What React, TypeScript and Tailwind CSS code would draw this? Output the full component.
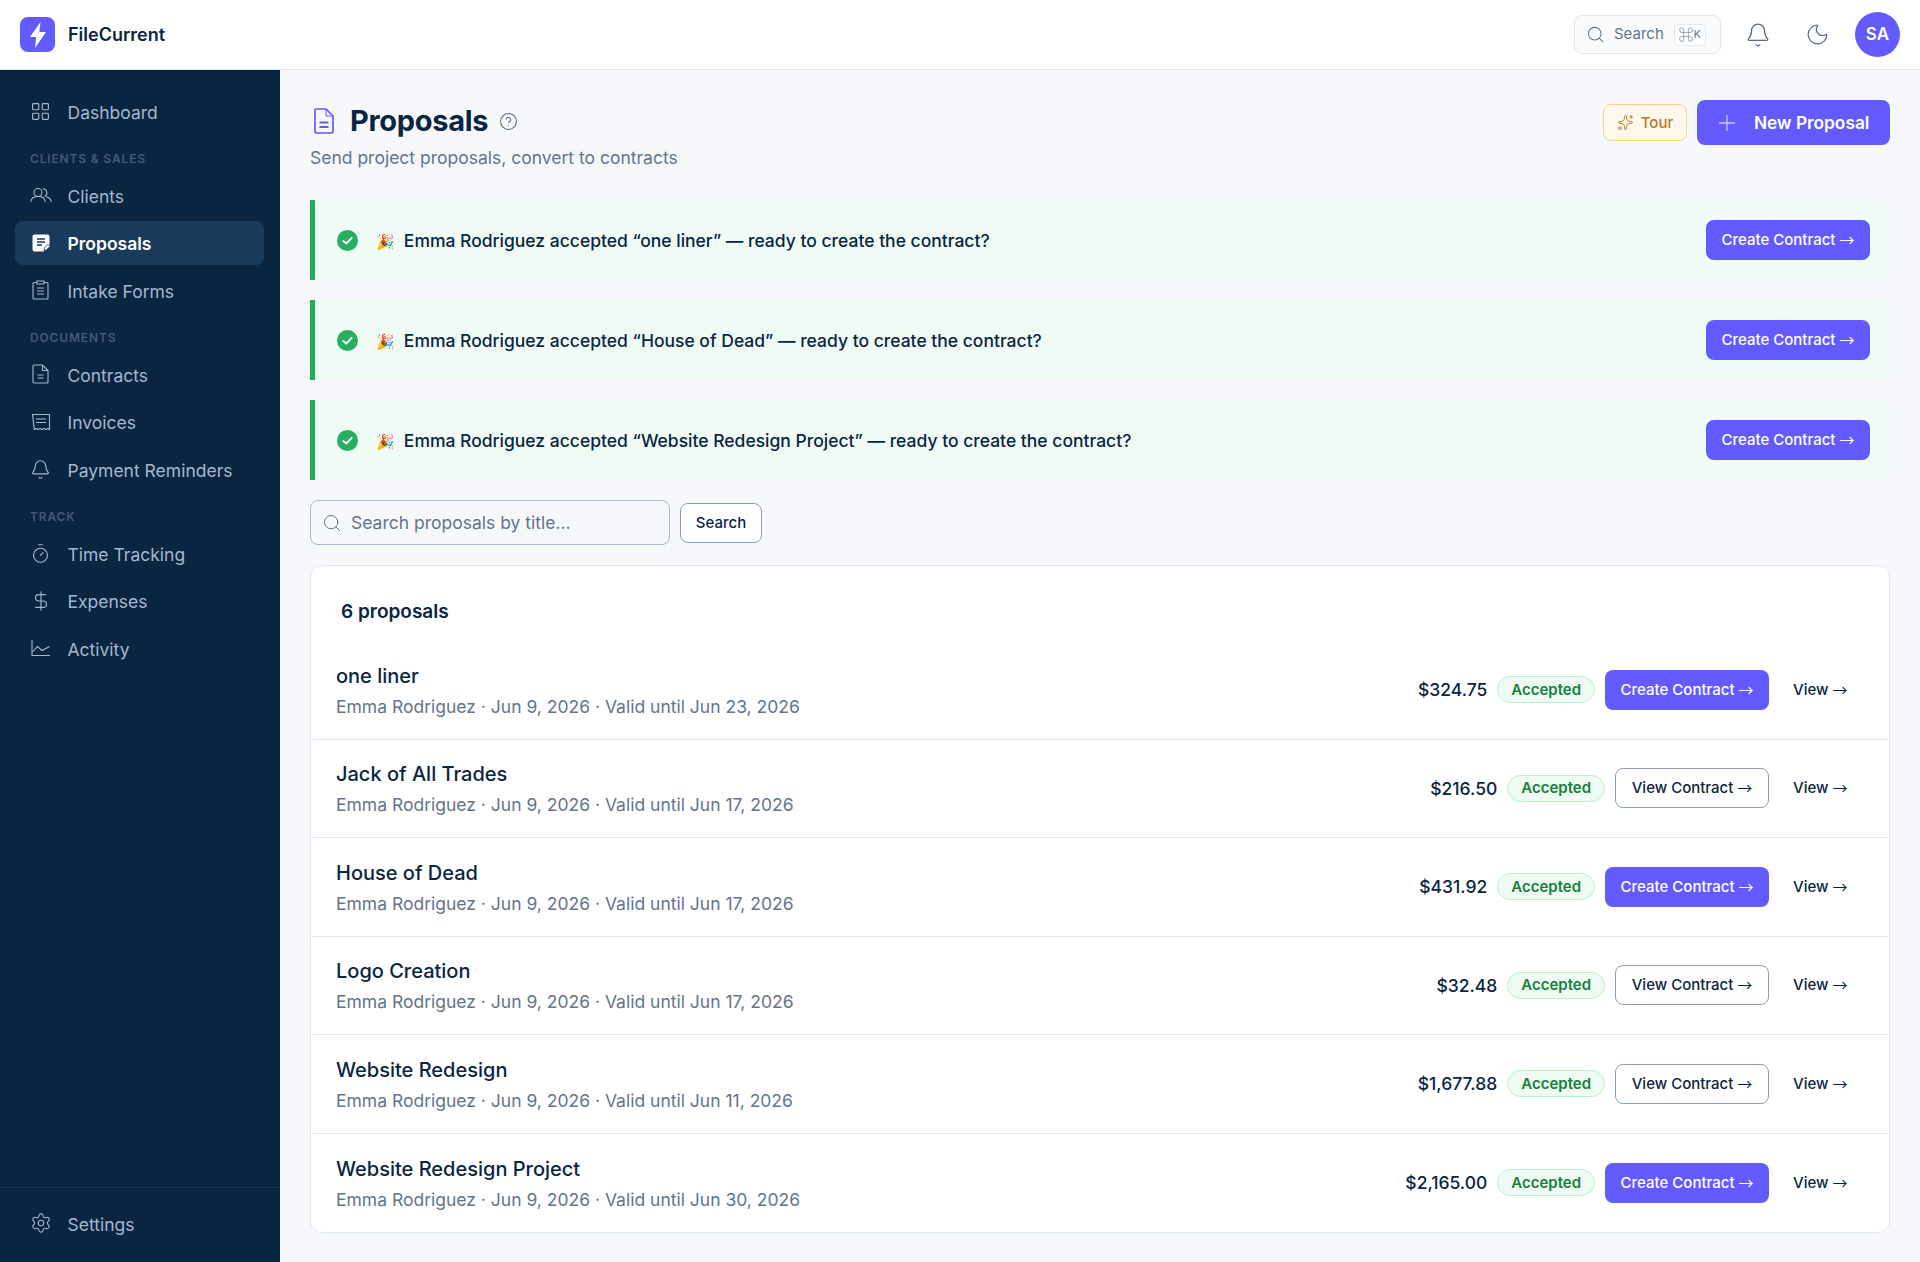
import React from "react";
import {
  LayoutGrid,
  Bell,
  Timer,
  DollarSign,
  Settings,
  Search,
  Moon,
  Plus,
  Sparkles,
  CircleHelp,
} from "lucide-react";

const iconClass = "w-[21px] h-[21px]";

const UsersIcon = () => (
  <svg viewBox="0 0 22 14" fill="none" stroke="currentColor" strokeWidth="1.1" className="w-[22px] h-[14px]" strokeLinecap="round">
    <circle cx="8" cy="4.500" r="4" />
    <path d="M0.800 13.500c.5-3.300 3.400-5 7.200-5s6.700 1.700 7.200 5" />
    <path d="M13.200 0.800a4 4 0 0 1 1.800 7.400" />
    <path d="M16.600 8.900c2.500.5 4.100 2.200 4.600 4.600" />
  </svg>
);

const DraftIcon = () => (
  <svg viewBox="0 0 18 18" className="w-[18px] h-[18px]">
    <path d="M2.500 0.500h13a2 2 0 0 1 2 2v9l-6 6h-9a2 2 0 0 1-2-2v-13a2 2 0 0 1 2-2z" fill="#ffffff" />
    <path d="M5 5h8M5 8h8M5 11h5" stroke="#1a3a5c" strokeWidth="1.4" />
    <path d="M12 16.500l.4-2.500 3.500-3.500 2 2-3.500 3.500z" fill="#ffffff" stroke="#1a3a5c" strokeWidth="0.8" />
  </svg>
);

const ClipboardIcon = () => (
  <svg viewBox="0 0 17 20" fill="none" stroke="currentColor" strokeWidth="1.1" className="w-[17px] h-[20px]">
    <path d="M5 2.500H2a1 1 0 0 0-1 1v14.500a1 1 0 0 0 1 1h13a1 1 0 0 0 1-1V3.500a1 1 0 0 0-1-1h-3" />
    <path d="M5 1h7v3H5z" />
    <path d="M5 8h7M5 11h7M5 14h7" />
  </svg>
);

const ContractIcon = () => (
  <svg viewBox="0 0 17 20" fill="none" stroke="currentColor" strokeWidth="1.1" className="w-[17px] h-[20px]">
    <path d="M2 1h8.500L16 6.500V18a1 1 0 0 1-1 1H2a1 1 0 0 1-1-1V2a1 1 0 0 1 1-1z" />
    <path d="M10.500 1v5.500H16" />
    <path d="M5.500 11h6M5.500 14h6" />
  </svg>
);

const ReceiptIcon = () => (
  <svg viewBox="0 0 20 18" fill="none" stroke="currentColor" strokeWidth="1.1" className="w-[20px] h-[18px]">
    <path d="M1.500 1.500h17v15c-.9 0-.9-1-1.900-1s-1 1-1.900 1-1-1-1.900-1-1 1-1.900 1-1-1-1.900-1-1 1-1.900 1-1-1-1.900-1-1 1-1.900 1z" />
    <path d="M5 6h10M5 9.500h10" />
  </svg>
);

const ChartIcon = () => (
  <svg viewBox="0 0 20 18" fill="none" stroke="currentColor" strokeWidth="1.1" className="w-[20px] h-[18px]">
    <path d="M1 1v15.500h18" />
    <path d="M1.500 13l5-5.500 4.500 4 7.500-4" />
  </svg>
);

const Bolt = () => (
  <svg viewBox="0 0 16 26" className="w-[16px] h-[26px]" fill="#ffffff">
    <path d="M10.500 0 0 15h6.200L5 26 16 10H9.300z" />
  </svg>
);

const ProposalDoc = () => (
  <svg viewBox="0 0 24 28" fill="none" stroke="#635bff" strokeWidth="1.7" className="w-[24px] h-[28px]">
    <path d="M4 2h10l7 7v15a2 2 0 0 1-2 2H5a2 2 0 0 1-2-2V3a1 1 0 0 1 1-1z" />
    <path d="M14 2v7h7" strokeWidth="1" />
    <path d="M7.500 15.500h9M7.500 20h9" strokeWidth="1.800" />
  </svg>
);

const CheckBadge = () => (
  <svg viewBox="0 0 20 20" className="w-[21px] h-[21px] shrink-0 mt-[1px]">
    <circle cx="10" cy="10" r="10" fill="#27ae60" />
    <path d="M6 10.500l2.800 2.500L14 7.500" fill="none" stroke="#ffffff" strokeWidth="1.800" strokeLinecap="round" strokeLinejoin="round" />
  </svg>
);

// the arrow comes from a fallback font in the original
const Arrow = () => <span className="font-['Noto_Sans_CJK_JP'] font-normal">→</span>;

type NavItem = { label: string; icon: React.ReactNode; active?: boolean };

const NavRow = ({ label, icon, active }: NavItem) => (
  <div
    className={`h-[44px] mb-[3.5px] flex items-center rounded-lg pl-[15px] text-[17.5px] ${
      active ? "bg-[#1a3a5c] text-white font-semibold" : "text-[#a3b8d0]"
    }`}
  >
    <span className="w-[38.500px] flex justify-center pr-[15px] -ml-[1px]">{icon}</span>
    <span className="pt-[4px]">{label}</span>
  </div>
);

const SectionLabel = ({ text }: { text: string }) => (
  <div className="h-[36.500px] flex items-center pl-[15px] pt-[8px] text-[12px] font-semibold tracking-[0.07em] text-[#42597a]">
    {text}
  </div>
);

const alerts = ["one liner", "House of Dead", "Website Redesign Project"];

const proposals = [
  { title: "one liner", until: "Jun 23, 2026", price: "$324.75", create: true },
  { title: "Jack of All Trades", until: "Jun 17, 2026", price: "$216.50", create: false },
  { title: "House of Dead", until: "Jun 17, 2026", price: "$431.92", create: true },
  { title: "Logo Creation", until: "Jun 17, 2026", price: "$32.48", create: false },
  { title: "Website Redesign", until: "Jun 11, 2026", price: "$1,677.88", create: false },
  { title: "Website Redesign Project", until: "Jun 30, 2026", price: "$2,165.00", create: true },
];

export default function App() {
  return (
    <div className="h-[1262px] flex flex-col overflow-hidden bg-[#f6f8fc] font-['Inter','Noto_Color_Emoji',sans-serif] text-[#0a2540]">
      {/* header */}
      <header className="h-[70px] shrink-0 bg-white border-b border-[#e2e6ec] flex items-center justify-between pl-[20px] pr-[20px]">
        <div className="flex items-center gap-[13px]">
          <div className="w-[35px] h-[35px] rounded-lg bg-[#635bff] flex items-center justify-center">
            <Bolt />
          </div>
          <span className="text-[18px] font-semibold">FileCurrent</span>
        </div>
        <div className="flex items-center">
          <div className="w-[147px] h-[39px] rounded-lg border border-[#e2e8f0] bg-[#f8fafc] flex items-center pl-[11px] text-[#64748b] text-[15px]">
            <Search className="w-[19px] h-[19px] mr-[9px]" strokeWidth={1.3} />
            Search
            <span className="ml-[10px] w-[32px] h-[22px] rounded border border-[#e2e8f0] bg-white text-[11px] flex items-center justify-center">
              <span className="text-[15px] font-['Noto_Sans_CJK_JP']">⌘</span>K
            </span>
          </div>
          <Bell className="w-[26px] h-[26px] ml-[24px] text-[#5b6b80]" strokeWidth={1.2} />
          <Moon className="w-[25px] h-[25px] ml-[34px] text-[#5b6b80]" strokeWidth={1.2} />
          <div className="ml-[25px] w-[45px] h-[45px] rounded-full bg-[#635bff] text-white font-semibold text-[17px] flex items-center justify-center">
            SA
          </div>
        </div>
      </header>

      <div className="flex flex-1 min-h-0">
        {/* sidebar */}
        <aside className="w-[280px] shrink-0 bg-[#0a2540] flex flex-col">
          <nav className="flex-1 pl-[15px] pr-[16px] pt-[19px]">
            <NavRow label="Dashboard" icon={<LayoutGrid className={iconClass} strokeWidth={1.3} />} />
            <SectionLabel text="CLIENTS & SALES" />
            <NavRow label="Clients" icon={<UsersIcon />} />
            <NavRow label="Proposals" icon={<DraftIcon />} active />
            <NavRow label="Intake Forms" icon={<ClipboardIcon />} />
            <SectionLabel text="DOCUMENTS" />
            <NavRow label="Contracts" icon={<ContractIcon />} />
            <NavRow label="Invoices" icon={<ReceiptIcon />} />
            <NavRow label="Payment Reminders" icon={<Bell className={iconClass} strokeWidth={1.3} />} />
            <SectionLabel text="TRACK" />
            <NavRow label="Time Tracking" icon={<Timer className={iconClass} strokeWidth={1.3} />} />
            <NavRow label="Expenses" icon={<DollarSign className="w-[22px] h-[22px]" strokeWidth={1.2} />} />
            <NavRow label="Activity" icon={<ChartIcon />} />
          </nav>
          <div className="h-[75px] border-t border-[#12324f] px-[15px] pt-[13px]">
            <NavRow label="Settings" icon={<Settings className="w-[22px] h-[22px]" strokeWidth={1.2} />} />
          </div>
        </aside>

        {/* main */}
        <main className="flex-1 min-w-0 px-[30px] pt-[30px]">
          <div className="flex justify-between items-start h-[100px]">
            <div>
              <div className="flex items-center h-[40px] mt-[1px]">
                <span className="ml-[2px] mr-[14px] flex w-[24px]">
                  <ProposalDoc />
                </span>
                <h1 className="text-[29px] font-bold tracking-[-0.01em]">Proposals</h1>
                <CircleHelp className="w-[19px] h-[19px] ml-[11px] text-[#52627a]" strokeWidth={1.3} />
              </div>
              <p className="text-[17.5px] text-[#64748b] mt-[4px]">Send project proposals, convert to contracts</p>
            </div>
            <div className="flex items-center gap-[10px]">
              <div className="w-[84px] h-[37px] rounded-lg border border-[#fcd57e] bg-[#fff8ed] text-[#b7791f] text-[15px] font-medium flex items-center justify-center gap-[7px]">
                <Sparkles className="w-[17px] h-[17px]" strokeWidth={1.3} />
                <span className="pt-[1px]">Tour</span>
              </div>
              <div className="w-[193px] h-[45px] rounded-lg bg-[#635bff] text-white text-[17.3px] font-semibold flex items-center pl-[17px]">
                <Plus className="w-[26px] h-[26px] mr-[14px] text-[#c9c6ff]" strokeWidth={1.2} />
                <span className="pt-[1px]">New Proposal</span>
              </div>
            </div>
          </div>

          {/* alerts */}
          <div className="flex flex-col gap-[20px]">
            {alerts.map((name) => (
              <div
                key={name}
                className="h-[80px] border-l-[5px] border-[#22ad5c] bg-[#f1fbf6] rounded-r-xl flex items-center pl-[22px] pr-[20px]"
              >
                <CheckBadge />
                <span className="ml-[18px] pt-[2px] text-[17.5px] font-medium flex-1">
                  <span className="text-[15px] mr-[4.500px]">🎉</span> Emma Rodriguez accepted “{name}” — ready to create the contract?
                </span>
                <div className="w-[164px] h-[40px] rounded-lg bg-[#635bff] text-white text-[15px] font-medium flex items-center justify-center gap-[4px]">
                  Create Contract <Arrow />
                </div>
              </div>
            ))}
          </div>

          {/* search */}
          <div className="flex items-center gap-[10px] mt-[20px] h-[45px]">
            <div className="w-[360px] h-[45px] rounded-lg border border-[#a9b6cb] flex items-center pl-[11px] text-[#64748b] text-[17.5px]">
              <Search className="w-[20px] h-[20px] mr-[9px]" strokeWidth={1.2} />
              <span className="pt-[1px]">Search proposals by title...</span>
            </div>
            <div className="w-[82px] h-[40px] rounded-lg border border-[#8f9db3] bg-white text-[15px] font-medium flex items-center justify-center pt-[1px]">
              Search
            </div>
          </div>

          {/* list */}
          <div className="mt-[20px] bg-white border border-[#e2e8f0] rounded-xl">
            <div className="h-[75px] flex items-center pl-[30px] pt-[17px] text-[19px] font-semibold">6 proposals</div>
            {proposals.map((p, i) => (
              <div
                key={p.title}
                className={`h-[98.500px] flex items-center justify-between pl-[25px] pr-[27.500px] ${
                  i < proposals.length - 1 ? "border-b border-[#e2e8f0]" : ""
                }`}
              >
                <div className="pt-[2px]">
                  <div className="text-[20px] font-medium leading-[26px]">{p.title}</div>
                  <div className="text-[17.5px] text-[#64748b] mt-[6px] leading-[24px]">
                    Emma Rodriguez · Jun 9, 2026 · Valid until {p.until}
                  </div>
                </div>
                <div className="flex items-center gap-[10px]">
                  <span className="text-[17.5px] font-medium pt-[1px]">{p.price}</span>
                  <span className="h-[27px] px-[13px] rounded-full border border-[#bbf0cf] bg-[#eefbf3] text-[#15803d] text-[15px] font-semibold flex items-center">
                    Accepted
                  </span>
                  {p.create ? (
                    <div className="w-[164px] h-[40px] rounded-lg bg-[#635bff] text-white text-[15px] font-medium flex items-center justify-center gap-[4px]">
                      Create Contract <Arrow />
                    </div>
                  ) : (
                    <div className="w-[154px] h-[40px] rounded-lg border border-[#8f9db3] bg-white text-[15px] font-medium flex items-center justify-center gap-[4px]">
                      View Contract <Arrow />
                    </div>
                  )}
                  <div className="px-[14px] text-[15px] font-medium flex gap-[4px]">
                    View <Arrow />
                  </div>
                </div>
              </div>
            ))}
          </div>
        </main>
      </div>
    </div>
  );
}
